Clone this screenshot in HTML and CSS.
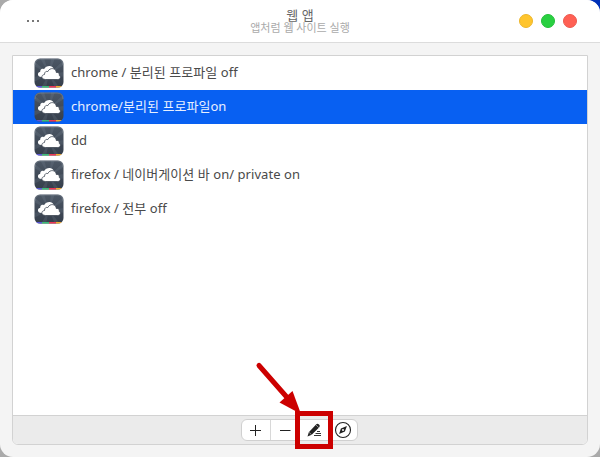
FILE: index.html
```html
<!DOCTYPE html>
<html lang="ko">
<head>
<meta charset="utf-8">
<title>웹 앱</title>
<link rel="stylesheet" href="styles.css">
</head>
<body>
<svg class="defs" width="0" height="0" aria-hidden="true">
  <defs>
    <linearGradient id="tile" x1="0" y1="0" x2="0" y2="1"><stop offset="0" stop-color="#4d5866"/><stop offset="1" stop-color="#343d4a"/></linearGradient>
    <clipPath id="round"><rect x="0.5" y="0.5" width="29" height="29" rx="5.5"/></clipPath>
    <symbol id="cloud-app" viewBox="0 0 30 30">
      <g clip-path="url(#round)">
        <rect width="30" height="30" fill="url(#tile)"/>
        <path d="M15 16 0 3V8ZM15 16 6 0h4ZM15 16 17 0h4ZM15 16 30 2v5ZM15 16 30 14v5ZM15 16 26 30h-5ZM15 16 12 30H7ZM15 16 0 19v5Z" fill="#a8b5c2" opacity=".12"/>
        <path d="M0 28h8v2H0z" fill="#5b58d8"/><path d="M8 28h7v2H8z" fill="#3dbb78"/><path d="M15 28h7v2h-7z" fill="#ee3655"/><path d="M22 28h8v2h-8z" fill="#f4ad32"/>
      </g>
      <path d="M1 7Q1 1 7 1h16q6 0 6 6" fill="none" stroke="#8e96a0" stroke-opacity=".6" stroke-width=".8"/>
      <path d="M7.500 19C3 19 3 14.500 6.200 13.800 6 11 8.500 10.300 10 11.200 12.500 6.500 19.500 7 20 12L17 19Z" fill="#fff"/>
      <path d="M11.500 21.500C7 21.500 6.700 16.900 10.500 16.500 10.300 13.800 12.600 12.800 13.800 13.600 15.800 9 22.300 10 22.300 14.500 24.700 14 25.800 15.500 25.200 17.300 27.400 18.500 26.400 21.500 23.800 21.500Z" fill="#fff" stroke="#3e4653" stroke-width=".8"/>
    </symbol>
  </defs>
</svg>
<main class="window">
  <header class="header">
    <div class="menu"><i></i><i></i><i></i></div>
    <div class="heading"><h1>웹 앱</h1><p>앱처럼 웹 사이트 실행</p></div>
    <div class="controls"><i class="minimize"></i><i class="maximize"></i><i class="close"></i></div>
  </header>
  <section class="panel">
    <ul class="list">
      <li><svg class="app"><use href="#cloud-app"/></svg><span>chrome / 분리된 프로파일 off</span></li>
      <li class="selected"><svg class="app"><use href="#cloud-app"/></svg><span>chrome/분리된 프로파일on</span></li>
      <li><svg class="app"><use href="#cloud-app"/></svg><span>dd</span></li>
      <li><svg class="app"><use href="#cloud-app"/></svg><span>firefox / 네이버게이션 바 on/ private on</span></li>
      <li><svg class="app"><use href="#cloud-app"/></svg><span>firefox / 전부 off</span></li>
    </ul>
    <footer class="toolbar">
      <div class="buttons">
        <button><svg width="16" height="16" viewBox="0 0 16 16"><path d="M2 8.500h11M7.500 3v11" stroke="#222" fill="none"/></svg></button>
        <button><svg width="16" height="16" viewBox="0 0 16 16"><path d="M3 8.500h10.500" stroke="#222" fill="none"/></svg></button>
        <button><svg width="16" height="16" viewBox="0 0 16 16"><path d="M1.500 14.500 2.800 10.200 10.300 2.200Q11.500 1.200 13 2.600 14.500 4 13.300 5.200L5.700 12.700Z" fill="#222"/><path d="m3.100 10.400 2.500 2.300M9.800 2.800l3 2.900" stroke="#fff" stroke-width=".5"/><path d="M11 9.500h3M9.500 11.500H15M8 13.500h7" stroke="#333"/></svg></button>
        <button><svg width="18" height="18" viewBox="0 0 18 18"><circle cx="9" cy="9" r="7.500" fill="none" stroke="#222" stroke-width="1.100"/><path d="m5.100 12.900 1.800-5.500 6-2.300-2 5.500Z" fill="#222"/><circle cx="9" cy="9" r="1" fill="#fff"/></svg></button>
      </div>
    </footer>
  </section>
</main>
<svg class="callout" width="90" height="94" viewBox="0 0 90 94" aria-hidden="true">
  <path d="m9 5.500 29 33" stroke="#c00" stroke-width="5" stroke-linecap="round"/>
  <path d="M51 54 29.500 42.500 42.500 31Z" fill="#c00"/>
  <rect x="47.500" y="53.500" width="33" height="33" fill="none" stroke="#c00" stroke-width="5"/>
</svg>
</body>
</html>
```

FILE: styles.css
```css
* { box-sizing: border-box; }
body { margin: 0; height: 457px; overflow: hidden; background: linear-gradient(90deg, #aaa 50%, transparent 50%), linear-gradient(#0030b8 50%, #aaa 50%); font-family: "Noto Sans", "Noto Sans CJK KR", sans-serif; }
.defs { position: absolute; }
.window { height: 457px; display: flex; flex-direction: column; overflow: hidden; border-radius: 13px; background: #f4f4f4; }
.header { height: 43px; flex: none; display: grid; grid-template-columns: 1fr auto 1fr; border-bottom: 1px solid #dcdcdc; background: #fff; }
.menu { display: flex; gap: 3px; padding: 20px 0 0 27px; }
.menu i { width: 2px; height: 2px; background: #777; }
.heading { text-align: center; padding-top: 6px; }
h1 { margin: 0; color: #666; font-size: 13px; line-height: 18px; font-weight: 400; }
.heading p { margin: -4px 0 0; color: #aaa; font-size: 11px; line-height: 15px; }
.controls { display: flex; justify-content: flex-end; gap: 8px; padding: 14px 23px 0 0; }
.controls i { width: 14px; height: 14px; border-radius: 50%; }
.minimize { background: #ffc52d; border: 1px solid #edb62a; }
.maximize { background: #29d041; border: 1px solid #23bf39; }
.close { background: #ff6054; border: 1px solid #ed594e; }
.panel { display: flex; flex-direction: column; height: 390px; margin: 12px; border: 1px solid #d2d2d2; border-radius: 0 0 6px 6px; background: #fff; overflow: hidden; }
.list { flex: 1; margin: 0; padding: 0; list-style: none; }
.list li { height: 34px; display: flex; align-items: center; gap: 7px; padding-left: 21px; color: #4a4a4a; font-size: 13px; line-height: 20px; letter-spacing: .05px; white-space: nowrap; }
.list .selected { background: #0860f2; color: #e8f0ff; }
.list span { padding-bottom: 2px; }
.app { width: 30px; height: 30px; flex: none; }
.toolbar { height: 29px; flex: none; display: flex; justify-content: center; padding: 3px 2px 0 0; border-top: 1px solid #d2d2d2; background: #ebebeb; }
.buttons { display: flex; width: 117px; height: 22px; border: 1px solid #d0d0d0; border-radius: 6px; background: #fff; }
.buttons button { flex: 1; display: flex; align-items: center; justify-content: center; padding: 0; border: 0; border-right: 1px solid #d8d8d8; background: none; }
.buttons button:last-child { border: 0; }
.callout { position: absolute; left: 250px; top: 360px; }
```
